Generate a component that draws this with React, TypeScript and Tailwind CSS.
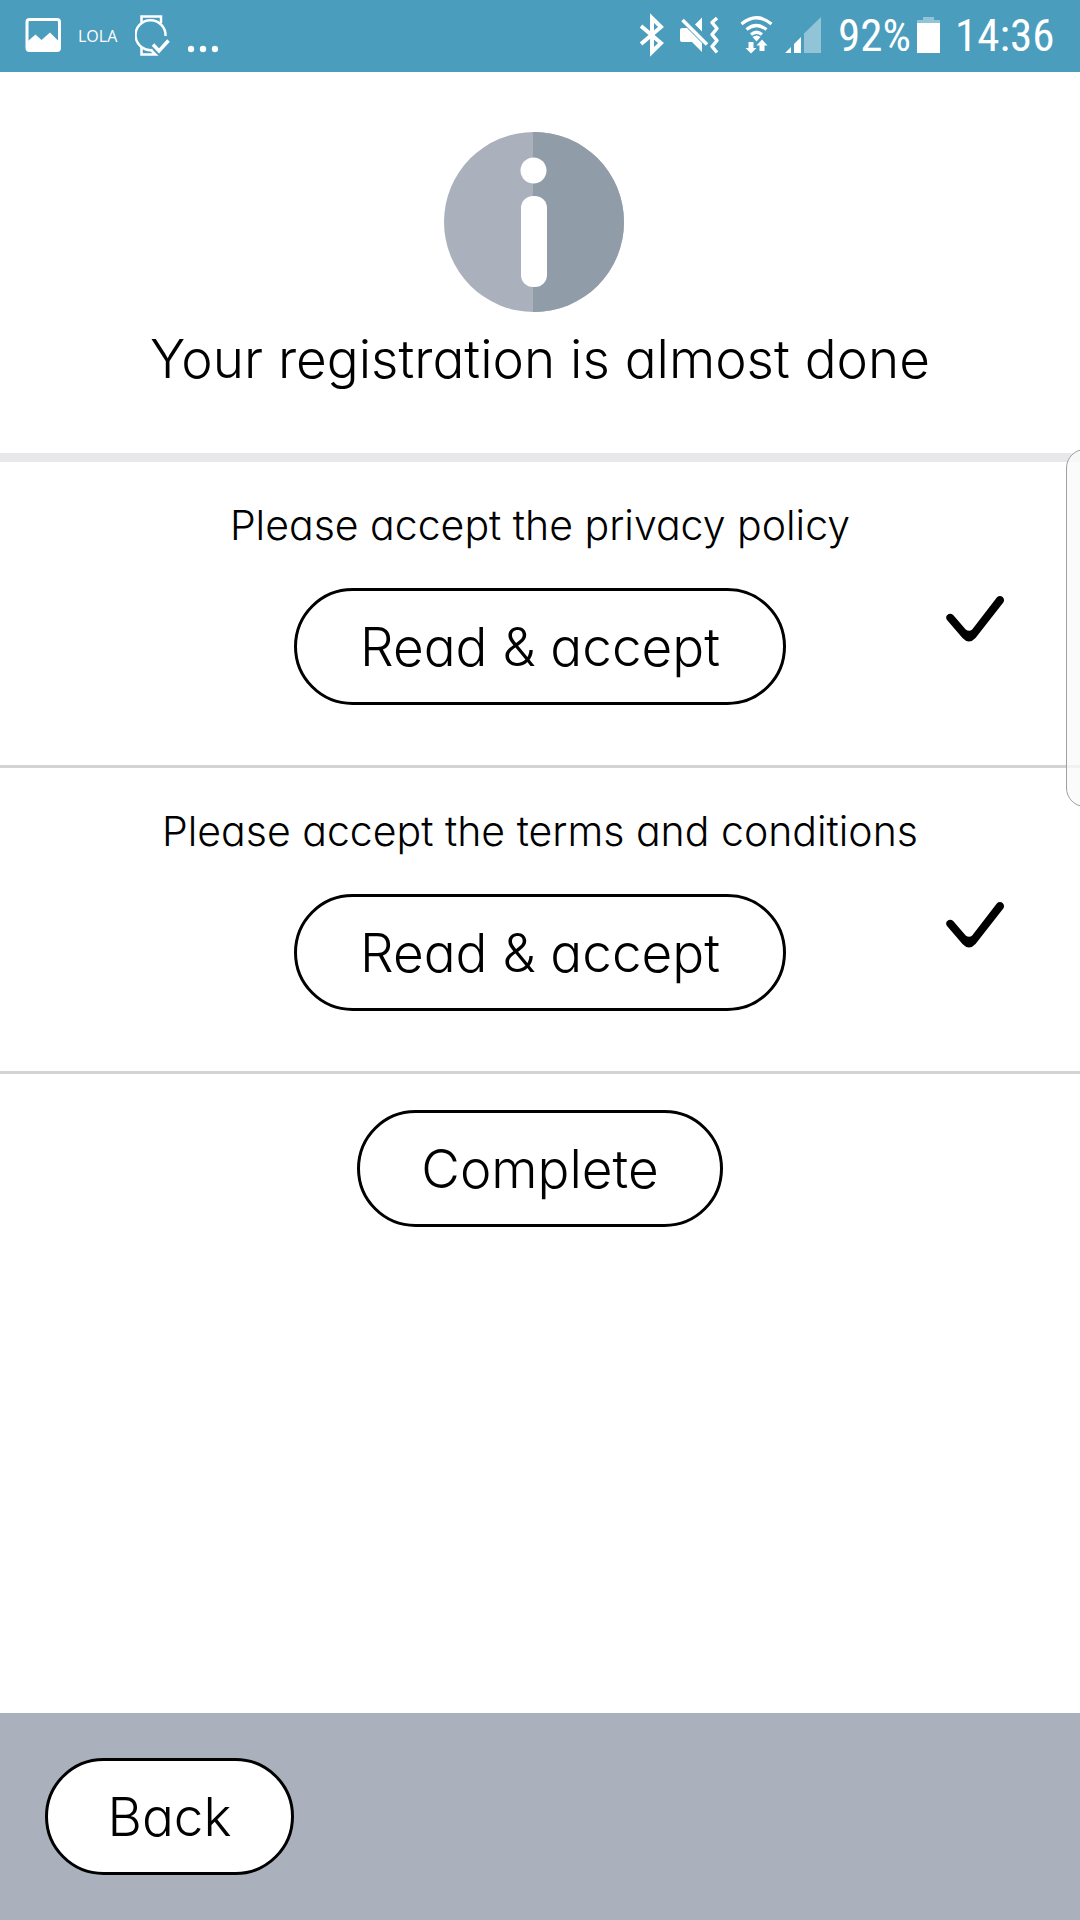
import type { ReactNode } from "react";

const policies = [
  { id: "privacy", label: "Please accept the privacy policy", accepted: true },
  { id: "terms", label: "Please accept the terms and conditions", accepted: true },
];

function PillButton({ className, children, ...rest }: { className: string; children: ReactNode; "aria-describedby"?: string }) {
  return (
    <button
      type="button"
      className={`h-[117px] rounded-full border-[3px] border-black bg-white text-[53px] leading-[70px] ${className}`}
      {...rest}
    >
      {children}
    </button>
  );
}

function StatusBar() {
  return (
    <header className="flex h-[72px] items-center justify-between bg-[#4a9dbd] pl-6 pr-[29px] font-normal text-white">
      <div className="flex items-center gap-2">
        <svg className="h-[72px] w-[46px]" viewBox="24 0 46 72" fill="none">
          <rect x="27" y="19.5" width="32.5" height="31" rx="2.5" stroke="currentColor" strokeWidth="3" />
          <path d="M28 41l7.5-6.500 6 5.500 8.500-7.500 9 9V51H28z" fill="currentColor" />
        </svg>
        <span className="w-[49px] font-['Open_Sans',sans-serif] text-[16px] leading-6">LOLA</span>
        <svg className="h-[72px] w-[45px]" viewBox="135 0 45 72" fill="none" stroke="currentColor" strokeWidth="2.5">
          <path d="M141.500 23v-6.500h19.500V23M141.500 48v6.500h14l-4-4" />
          <path d="M165.500 36a15 15 0 1 0-13 14" />
          <path d="M153 44.500l6 6.500 9.500-10.500" strokeWidth="3.500" />
        </svg>
        <svg className="h-[72px] w-[30px]" viewBox="188 0 30 72" fill="currentColor">
          <circle cx="191" cy="49" r="3.200" />
          <circle cx="203" cy="49" r="3.200" />
          <circle cx="215" cy="49" r="3.200" />
        </svg>
      </div>

      <div className="flex items-center gap-2 font-['Roboto_Condensed','Liberation_Sans_Narrow',Roboto,sans-serif] text-[45px] leading-[54px]">
        <svg className="h-[72px] w-8" viewBox="640 0 32 72" fill="none" stroke="currentColor" strokeWidth="4">
          <path d="M641 26l20 17-9 9V18l9 9-20 17" />
        </svg>
        <svg className="h-[72px] w-[52px]" viewBox="680 0 52 72" fill="none">
          <path d="M682 28h5l15 15v9l-10-10h-10q-2 0-2-2V30q0-2 2-2zM695 24.500l7-7v14z" fill="currentColor" />
          <path d="M682.500 20l24.500 24.500" stroke="currentColor" strokeWidth="3.500" />
          <path d="M717 18l-5 4.500 5 6-5 6 5 6-5 6 5 6" stroke="currentColor" strokeWidth="3.500" strokeLinejoin="round" />
        </svg>
        <svg className="h-[72px] w-[37px]" viewBox="740 0 37 72" fill="none">
          <path d="M741.500 24q15-12.500 30 0M746.500 29.500q10-8 20 0M751 34.500q5.500-4.500 11 0" stroke="currentColor" strokeWidth="3.200" />
          <path d="M752.500 37q4-3 8 0l-4 4.500zM748.500 42h5v6h3l-5.500 5.500-5.500-5.500h3zM759.500 51h5v-5.500h3l-5.500-6-5.500 6h3z" fill="currentColor" />
        </svg>
        <svg className="h-[72px] w-[45px]" viewBox="785 0 45 72" fill="currentColor">
          <path d="M785 53l6-6v6zM794 44l7-7v16h-7z" />
          <path d="M804 33.500l17-16.500v36h-17z" opacity=".4" />
        </svg>
        <span className="w-[71px] whitespace-nowrap">92%</span>
        <svg className="h-[72px] w-[30px]" viewBox="917 0 30 72" fill="currentColor">
          <path d="M917 20h6v-3h11v3h6v3h-23z" opacity=".4" />
          <path d="M917 23h23v30h-23z" />
        </svg>
        <time className="w-24 whitespace-nowrap">14:36</time>
      </div>
    </header>
  );
}

export default function App() {
  return (
    <div className="relative flex min-h-screen flex-col overflow-hidden bg-white font-['Inter',sans-serif] font-light text-black [font-feature-settings:'cv11']">
      <StatusBar />

      <main className="flex grow flex-col">
        <section className="flex flex-col items-center border-b-[9px] border-[#e8e8ea] pt-[60px] pb-[59px]">
          <svg className="mr-3 size-[180px]" viewBox="0 0 180 180">
            <circle cx="90" cy="90" r="90" fill="#aab1bd" />
            <path d="M89 0h1a90 90 0 0 1 0 180h-1z" fill="#909da8" />
            <circle cx="89.500" cy="38.500" r="13" fill="#fff" />
            <rect x="77" y="64" width="26" height="91" rx="12" fill="#fff" />
          </svg>
          <h1 className="mt-3 text-center text-[53px] leading-[70px]">Your registration is almost done</h1>
        </section>

        {policies.map((policy) => (
          <section key={policy.id} className="border-b-[3px] border-[#d3d3d3] pt-9 pb-[60px]">
            <p id={policy.id} className="mb-9 text-center text-[41px] leading-[54px]">
              {policy.label}
            </p>
            <div className="grid grid-cols-[1fr_auto_1fr] items-start">
              <PillButton className="col-start-2 w-[492px]" aria-describedby={policy.id}>
                Read &amp; accept
              </PillButton>
              {policy.accepted && (
                <svg className="mr-[76px] h-[60px] w-[58px] justify-self-end" viewBox="0 0 58 60" role="img" aria-label="Accepted">
                  <path
                    d="M1 32c-3-4 2.500-8.500 6.200-5l12.500 14.500q3.500 2.500 6.500 0L51 9.300c3.500-3.600 9 1 6.300 5.200L29.500 50q-6.500 7-13 0z"
                    fill="#000"
                  />
                </svg>
              )}
            </div>
          </section>
        ))}

        <div className="flex justify-center pt-9">
          <PillButton className="w-[366px]">Complete</PillButton>
        </div>
      </main>

      <footer className="bg-[#aab1bd] p-[45px]">
        <PillButton className="w-[249px]">Back</PillButton>
      </footer>

      {/* edge panel handle */}
      <div className="absolute top-[449px] -right-6 h-[358px] w-[38px] rounded-[22px] border border-[#a0a0a0] bg-[#fafafa]/80" />
    </div>
  );
}
